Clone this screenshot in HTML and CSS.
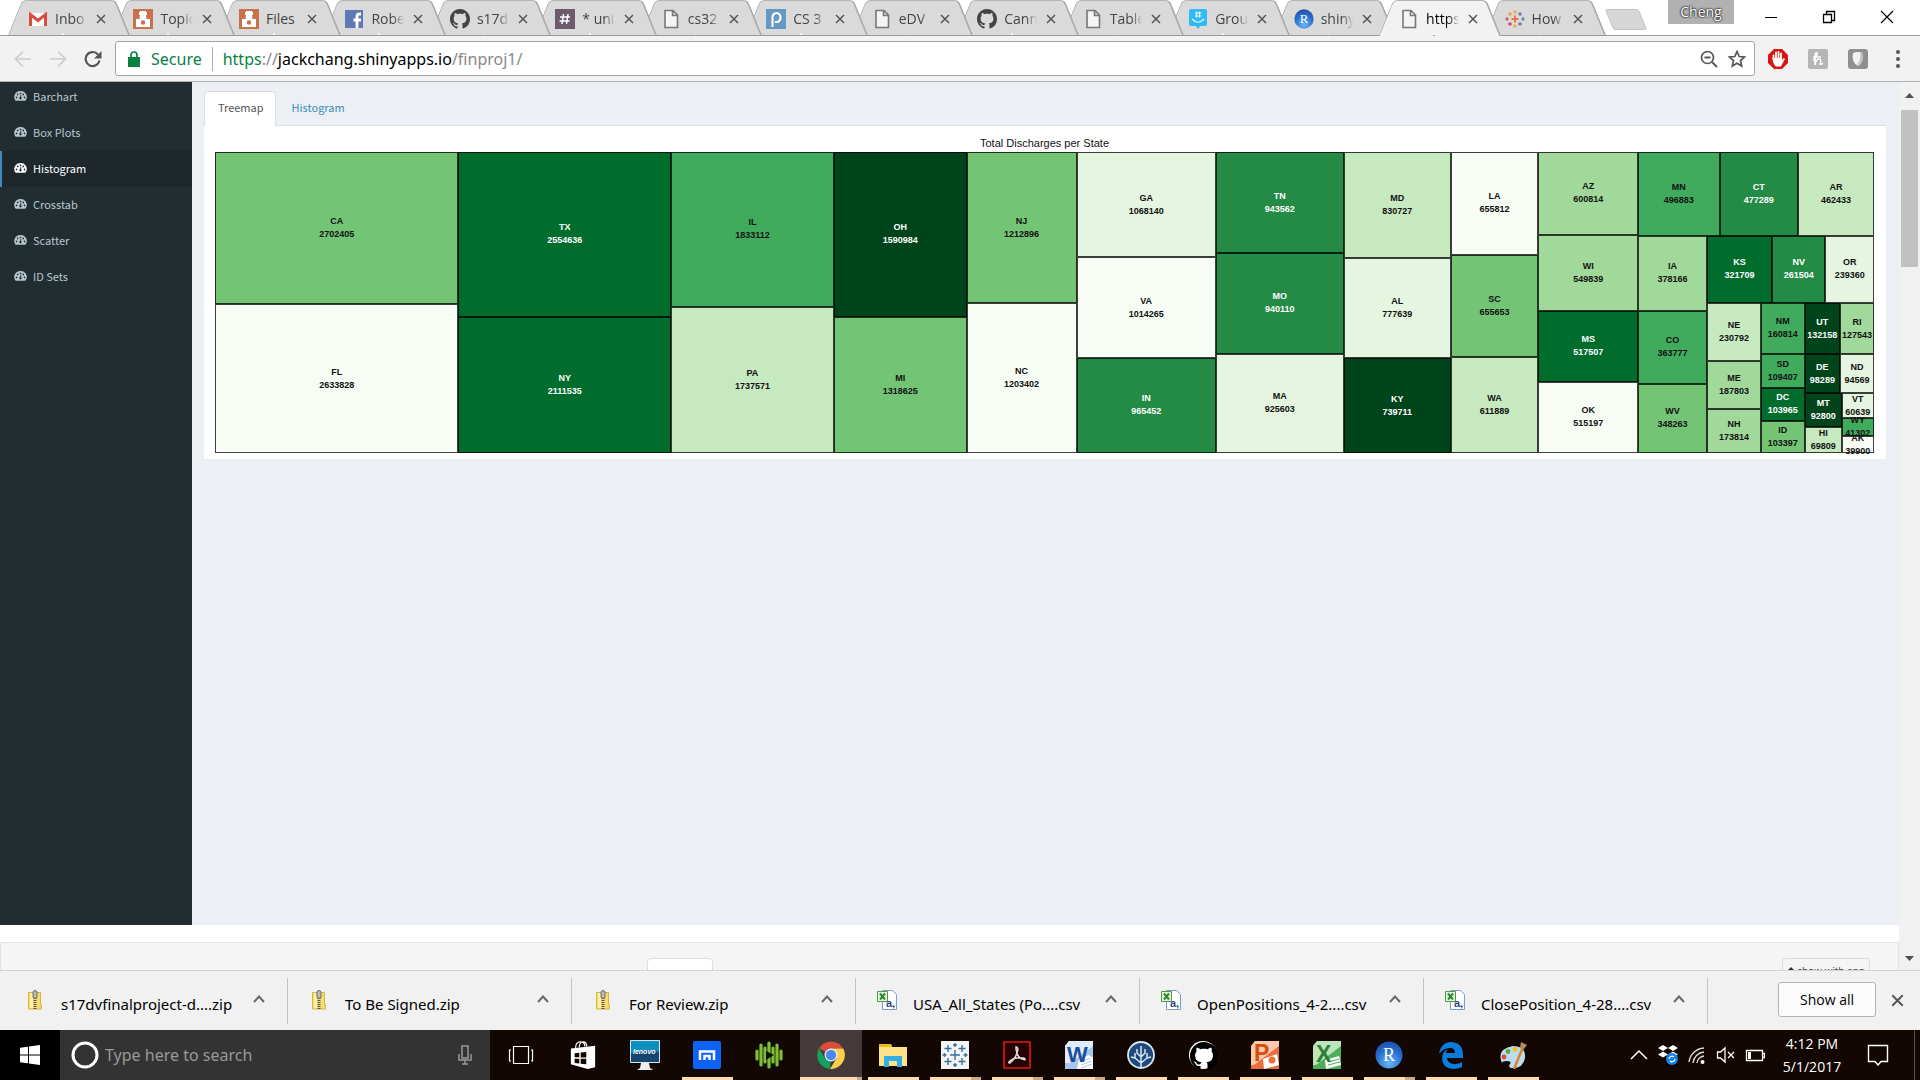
FILE: index.html
```html
<!DOCTYPE html>
<html lang="en">
<head>
<meta charset="utf-8">
<title>https://jackchang.shinyapps.io/finproj1/</title>
<link rel="stylesheet" href="styles.css">
</head>
<body>
<svg class="sprite" aria-hidden="true">
  <symbol id="x" viewBox="0 0 10 10"><path d="M1 1l8 8M9 1l-8 8" fill="none" stroke="currentColor" stroke-width="1.5"/></symbol>
  <symbol id="page" viewBox="0 0 20 20"><path d="M4 1.500h8l4.500 4.500v12.500H4zM11.500 1.500v5h5" fill="#f4f4f4" stroke="#777" stroke-width="1.600"/></symbol>
  <symbol id="github" viewBox="0 0 16 16"><path fill="currentColor" d="M8 0C3.580 0 0 3.580 0 8c0 3.540 2.290 6.530 5.470 7.590.4.070.55-.17.55-.38 0-.19-.010-.82-.010-1.490-2.010.37-2.530-.49-2.690-.94-.090-.23-.48-.94-.82-1.130-.28-.15-.68-.52-.010-.53.63-.010 1.080.58 1.230.82.72 1.210 1.870.87 2.330.66.070-.52.28-.87.51-1.070-1.780-.2-3.640-.89-3.640-3.950 0-.87.31-1.590.82-2.150-.080-.2-.36-1.020.080-2.120 0 0 .67-.21 2.200.82.64-.18 1.320-.27 2-.27.68 0 1.360.090 2 .27 1.530-1.040 2.200-.82 2.200-.82.44 1.100.16 1.920.080 2.120.51.56.82 1.270.82 2.150 0 3.070-1.870 3.750-3.650 3.950.29.25.54.73.54 1.480 0 1.070-.010 1.930-.010 2.200 0 .21.15.46.55.38A8.010 8.010 0 0 0 16 8c0-4.420-3.580-8-8-8z"/></symbol>
  <symbol id="canvas" viewBox="0 0 20 20"><path fill="#c8714b" d="M0 0h20v20H0z"/><path fill="#fff" d="M7 2h6v1h1v3H6V3h1zM7 6h6l.5 4H17v8H3v-8h3.500z"/><circle cx="10" cy="13.500" r="2.200" fill="#c8714b"/></symbol>
  <symbol id="dash" viewBox="0 0 14 12"><path fill="currentColor" d="M7 .5a6.500 6.500 0 0 0-5.700 10q.3.500.8.500h9.800q.5 0 .8-.5A6.500 6.500 0 0 0 7 .5z"/><g fill="#222d32"><circle cx="2.700" cy="7.500" r=".9"/><circle cx="4" cy="4.300" r=".9"/><circle cx="7" cy="3" r=".9"/><circle cx="10" cy="4.300" r=".9"/><circle cx="11.300" cy="7.500" r=".9"/><path d="M7.200 4.500l.8.200-.3 2.600a1.300 1.300 0 1 1-1.100-.2z"/></g></symbol>
  <symbol id="zip" viewBox="0 0 16 20"><path fill="#f8dc71" stroke="#d8b53c" d="M1.500 2.500h12V15h1v4h-13z"/><path d="M3 3h3v15H3z" fill="#fdf0a8"/><path d="M8 8v11" stroke="#555" stroke-width="3" stroke-dasharray="1 1"/><rect x="6" y=".5" width="4" height="8" rx="2" fill="#bbb" stroke="#666"/></symbol>
  <symbol id="csv" viewBox="0 0 20 20"><path fill="#fff" stroke="#7d9cc4" d="M5.500.5h10l4 4v15h-14z"/><path fill="#e4f1df" stroke="#4e9a47" d="M.5 1.500h10v10H.5z"/><path d="M3 3.500l5 6M8 3.500l-5 6" stroke="#2d8a2a" stroke-width="2"/><text x="9" y="16.500" font-size="11" font-weight="700" font-family="Liberation Sans, sans-serif" fill="#294a86">a,</text></symbol>
  <symbol id="up" viewBox="0 0 12 8"><path d="M1 7l5-5.500L11 7" fill="none" stroke="currentColor" stroke-width="2"/></symbol>
  <symbol id="rlogo" viewBox="0 0 28 28"><defs><radialGradient id="rg" cx=".5" cy=".8" r=".8"><stop offset="0" stop-color="#69b8f5"/><stop offset=".6" stop-color="#2a6fd0"/><stop offset="1" stop-color="#1d4fa8"/></radialGradient></defs><circle cx="14" cy="14" r="13.500" fill="url(#rg)"/><text x="14" y="20" text-anchor="middle" font-size="18" font-family="Liberation Serif, serif" fill="#fff">R</text></symbol>
</svg>

<header class="browser">
  <div class="tabstrip">
    <div class="tabs">
      <div class="tab" style="--z:15"><svg class="fav" viewBox="0 0 20 20"><path fill="#fff" d="M1 4h18v13H1z"/><path d="M2.500 17V5.500L10 11.500l7.500-6V17" fill="none" stroke="#dc4b3f" stroke-width="3"/></svg><span class="title">Inbo</span><button class="close" aria-label="Close"><svg><use href="#x"/></svg></button></div>
      <div class="tab" style="--z:14"><svg class="fav"><use href="#canvas"/></svg><span class="title">Topic</span><button class="close" aria-label="Close"><svg><use href="#x"/></svg></button></div>
      <div class="tab" style="--z:13"><svg class="fav"><use href="#canvas"/></svg><span class="title whole">Files</span><button class="close" aria-label="Close"><svg><use href="#x"/></svg></button></div>
      <div class="tab" style="--z:12"><svg class="fav" viewBox="0 0 20 20"><path fill="#6079b4" d="M1 1h18v18H1z"/><path d="M13 19v-8m-3.500 0H17m0-6h-1.500q-2.500 0-2.500 2.500V12" fill="none" stroke="#fff" stroke-width="2.800"/></svg><span class="title">Robe</span><button class="close" aria-label="Close"><svg><use href="#x"/></svg></button></div>
      <div class="tab" style="--z:11"><svg class="fav dark"><use href="#github"/></svg><span class="title">s17d</span><button class="close" aria-label="Close"><svg><use href="#x"/></svg></button></div>
      <div class="tab" style="--z:10"><svg class="fav" viewBox="0 0 20 20"><path fill="#6d5a6c" d="M0 0h20v20H0z"/><path d="M8.500 5l-1.500 10M13 5l-1.500 10M5 8h10M4.500 12h10" stroke="#fff" stroke-width="1.500"/></svg><span class="title">* uni</span><button class="close" aria-label="Close"><svg><use href="#x"/></svg></button></div>
      <div class="tab" style="--z:9"><svg class="fav"><use href="#page"/></svg><span class="title">cs32</span><button class="close" aria-label="Close"><svg><use href="#x"/></svg></button></div>
      <div class="tab" style="--z:8"><svg class="fav" viewBox="0 0 20 20"><path fill="#6599c3" d="M0 0h20v20H0z"/><path d="M6.500 18V8.500a4 4.500 0 1 1 4 4.500H9" fill="none" stroke="#fff" stroke-width="2.200"/></svg><span class="title">CS 3</span><button class="close" aria-label="Close"><svg><use href="#x"/></svg></button></div>
      <div class="tab" style="--z:7"><svg class="fav"><use href="#page"/></svg><span class="title">eDV</span><button class="close" aria-label="Close"><svg><use href="#x"/></svg></button></div>
      <div class="tab" style="--z:6"><svg class="fav dark"><use href="#github"/></svg><span class="title">Cann</span><button class="close" aria-label="Close"><svg><use href="#x"/></svg></button></div>
      <div class="tab" style="--z:5"><svg class="fav"><use href="#page"/></svg><span class="title">Table</span><button class="close" aria-label="Close"><svg><use href="#x"/></svg></button></div>
      <div class="tab" style="--z:4"><svg class="fav" viewBox="0 0 20 20"><path fill="#2fb9f5" d="M3 0h14q2 0 2 2v13q0 2-2 2h-5l-2 3-2-3H3q-2 0-2-2V2q0-2 2-2z"/><path d="M8.500 2.500v6M11.500 2.500v6M7 4h6.500M7 7h6.500M4 10q6 6.500 12 0" fill="none" stroke="#e8f6fd" stroke-width="1.200"/></svg><span class="title">Grou</span><button class="close" aria-label="Close"><svg><use href="#x"/></svg></button></div>
      <div class="tab" style="--z:3"><svg class="fav"><use href="#rlogo"/></svg><span class="title">shiny</span><button class="close" aria-label="Close"><svg><use href="#x"/></svg></button></div>
      <div class="tab active" style="--z:20"><svg class="fav"><use href="#page"/></svg><span class="title">https</span><button class="close" aria-label="Close"><svg><use href="#x"/></svg></button></div>
      <div class="tab" style="--z:2"><svg class="fav" viewBox="0 0 20 20"><path d="M10 6.500v7M6.500 10h7" stroke="#ee7440" stroke-width="2"/><path d="M10 1v4M8 3h4M10 15v4M8 17h4" stroke="#f0a95c" stroke-width="1.300"/><path d="M15 3v4M13 5h4M18 8v4M16.500 10h3M15 13v4M13 15h4" stroke="#6b7fae" stroke-width="1.300"/><path d="M5 3v4M3 5h4" stroke="#eaa04e" stroke-width="1.300"/><path d="M2 8v4M.5 10h3M5 13v4M3 15h4" stroke="#c9556d" stroke-width="1.300"/></svg><span class="title">How</span><button class="close" aria-label="Close"><svg><use href="#x"/></svg></button></div>
    </div>
    <div class="window-controls">
      <button class="newtab" aria-label="New tab"></button>
      <button class="user">Cheng</button>
      <button class="winbtn" aria-label="Minimize"><svg viewBox="0 0 14 14"><path d="M1 7.500h12" stroke="#000"/></svg></button>
      <button class="winbtn" aria-label="Restore"><svg viewBox="0 0 14 14"><path d="M1.500 4.500h8v8h-8zM4.500 4.500v-3h8v9h-3" fill="none" stroke="#000" stroke-width="1.300"/></svg></button>
      <button class="winbtn" aria-label="Close window"><svg viewBox="0 0 14 14"><path d="M1 1l12 12M13 1L1 13" stroke="#000" stroke-width="1.200"/></svg></button>
    </div>
  </div>

  <div class="toolbar">
    <button class="nav off" aria-label="Back"><svg viewBox="0 0 18 18"><path d="M17 9H2M9 1.500L1.500 9 9 16.500" fill="none" stroke="currentColor" stroke-width="1.700"/></svg></button>
    <button class="nav off" aria-label="Forward"><svg viewBox="0 0 18 18"><path d="M1 9h15M9 1.500L16.500 9 9 16.500" fill="none" stroke="currentColor" stroke-width="1.700"/></svg></button>
    <button class="nav" aria-label="Reload"><svg viewBox="0 0 18 18"><path d="M15.500 10.500A7 7 0 1 1 14 4.500" fill="none" stroke="currentColor" stroke-width="2.200"/><path d="M17.500 1v7.500H10z" fill="currentColor"/></svg></button>
    <div class="omnibox">
      <svg class="lock" viewBox="0 0 12 16"><path d="M0 6h12v10H0z" fill="#0b8043"/><path d="M3 7V4a3 3 0 0 1 6 0v3" fill="none" stroke="#0b8043" stroke-width="1.700"/></svg>
      <span class="secure">Secure</span>
      <span class="url"><span class="scheme">https</span>://<span class="host">jackchang.shinyapps.io</span>/finproj1/</span>
      <button class="omni" aria-label="Zoom"><svg viewBox="0 0 18 18"><circle cx="7.500" cy="7.500" r="6" fill="none" stroke="#555" stroke-width="1.700"/><path d="M4.500 7.500h6M12 12l5 5" stroke="#555" stroke-width="1.800"/></svg></button>
      <button class="omni" aria-label="Bookmark"><svg viewBox="0 0 18 18"><path d="M9 1.500l2.200 5 5.300.5-4 3.600 1.200 5.400L9 13.200 4.300 16l1.200-5.400-4-3.600 5.300-.5z" fill="none" stroke="#555" stroke-width="1.700"/></svg></button>
    </div>
    <button class="ext" aria-label="Ad blocker"><svg viewBox="0 0 20 20"><path d="M6 0h8l6 6v8l-6 6H6l-6-6V6z" fill="#d9150e"/><path d="M5.500 10V6.500M8 10V3.500M10.500 10V2.800M13 10V4.500" stroke="#fff" stroke-width="1.800" stroke-linecap="round"/><path d="M4.600 9h9.300v2l2-2 1 1-4 7.500H8q-3.400-2.500-3.400-8.500z" fill="#fff"/></svg></button>
    <button class="ext" aria-label="Honey"><svg viewBox="0 0 20 20"><rect width="20" height="20" rx="2" fill="#b5b5b5"/><path d="M5 11q5-3 4-7-2-1-2 5v7q1-6 4-6t1 5q1 1 3-1M5 8h8" fill="none" stroke="#fff" stroke-width="1.500"/></svg></button>
    <button class="ext" aria-label="Extension"><svg viewBox="0 0 20 20"><rect width="20" height="20" rx="3" fill="#8f8f8f"/><path d="M5 4q5-2 10 0 1 9-5 13-7-4-5-13z" fill="#f2f2f2"/><path d="M12 4q2 6-3 12h1q6-4 5-12z" fill="#bbb"/></svg></button>
    <button class="ext menu" aria-label="Menu"><svg viewBox="0 0 20 20"><g fill="#555"><circle cx="10" cy="3" r="2"/><circle cx="10" cy="10" r="2"/><circle cx="10" cy="17" r="2"/></g></svg></button>
  </div>
</header>

<div class="viewport">
  <div class="document">
    <div class="app">
      <nav class="sidebar">
        <a href="#barchart"><svg><use href="#dash"/></svg>Barchart</a>
        <a href="#box"><svg><use href="#dash"/></svg>Box Plots</a>
        <a href="#histogram" class="current"><svg><use href="#dash"/></svg>Histogram</a>
        <a href="#crosstab"><svg><use href="#dash"/></svg>Crosstab</a>
        <a href="#scatter"><svg><use href="#dash"/></svg>Scatter</a>
        <a href="#sets"><svg><use href="#dash"/></svg>ID Sets</a>
      </nav>
      <main class="content">
        <div class="pills"><a href="#treemap" class="current">Treemap</a><a href="#hist">Histogram</a></div>
        <section class="box">
          <h1>Total Discharges per State</h1>
          <div class="treemap">
            <div class="col" style="flex-grow:5336233"><div class="cell g4" style="flex-grow:2702405"><p>CA<br>2702405</p></div><div class="cell g0" style="flex-grow:2633828"><p>FL<br>2633828</p></div></div>
            <div class="col" style="flex-grow:4666171"><div class="cell g7" style="flex-grow:2554636"><p>TX<br>2554636</p></div><div class="cell g7" style="flex-grow:2111535"><p>NY<br>2111535</p></div></div>
            <div class="col" style="flex-grow:3570683"><div class="cell g5" style="flex-grow:1833112"><p>IL<br>1833112</p></div><div class="cell g2" style="flex-grow:1737571"><p>PA<br>1737571</p></div></div>
            <div class="col" style="flex-grow:2909609"><div class="cell g8" style="flex-grow:1590984"><p>OH<br>1590984</p></div><div class="cell g4" style="flex-grow:1318625"><p>MI<br>1318625</p></div></div>
            <div class="col" style="flex-grow:2416298"><div class="cell g4" style="flex-grow:1212896"><p>NJ<br>1212896</p></div><div class="cell g0" style="flex-grow:1203402"><p>NC<br>1203402</p></div></div>
            <div class="col" style="flex-grow:3047857"><div class="cell g1" style="flex-grow:1068140"><p>GA<br>1068140</p></div><div class="cell g0" style="flex-grow:1014265"><p>VA<br>1014265</p></div><div class="cell g6" style="flex-grow:965452"><p>IN<br>965452</p></div></div>
            <div class="col" style="flex-grow:2809275"><div class="cell g6" style="flex-grow:943562"><p>TN<br>943562</p></div><div class="cell g6" style="flex-grow:940110"><p>MO<br>940110</p></div><div class="cell g1" style="flex-grow:925603"><p>MA<br>925603</p></div></div>
            <div class="col" style="flex-grow:2348077"><div class="cell g2" style="flex-grow:830727"><p>MD<br>830727</p></div><div class="cell g1" style="flex-grow:777639"><p>AL<br>777639</p></div><div class="cell g8" style="flex-grow:739711"><p>KY<br>739711</p></div></div>
            <div class="col" style="flex-grow:1923354"><div class="cell g0" style="flex-grow:655812"><p>LA<br>655812</p></div><div class="cell g4" style="flex-grow:655653"><p>SC<br>655653</p></div><div class="cell g2" style="flex-grow:611889"><p>WA<br>611889</p></div></div>
            <div class="col" style="flex-grow:2183357"><div class="cell g3" style="flex-grow:600814"><p>AZ<br>600814</p></div><div class="cell g3" style="flex-grow:549839"><p>WI<br>549839</p></div><div class="cell g7" style="flex-grow:517507"><p>MS<br>517507</p></div><div class="cell g0" style="flex-grow:515197"><p>OK<br>515197</p></div></div>
            <div class="col" style="flex-grow:5176385">
              <div class="row" style="flex-grow:1436605"><div class="cell g5" style="flex-grow:496883"><p>MN<br>496883</p></div><div class="cell g6" style="flex-grow:477289"><p>CT<br>477289</p></div><div class="cell g2" style="flex-grow:462433"><p>AR<br>462433</p></div></div>
              <div class="row" style="flex-grow:3739780">
                <div class="col" style="flex-grow:1090206"><div class="cell g3" style="flex-grow:378166"><p>IA<br>378166</p></div><div class="cell g5" style="flex-grow:363777"><p>CO<br>363777</p></div><div class="cell g4" style="flex-grow:348263"><p>WV<br>348263</p></div></div>
                <div class="col" style="flex-grow:2649574">
                  <div class="row" style="flex-grow:822573"><div class="cell g7" style="flex-grow:321709"><p>KS<br>321709</p></div><div class="cell g6" style="flex-grow:261504"><p>NV<br>261504</p></div><div class="cell g1" style="flex-grow:239360"><p>OR<br>239360</p></div></div>
                  <div class="row" style="flex-grow:1827001">
                    <div class="col" style="flex-grow:592409"><div class="cell g2" style="flex-grow:230792"><p>NE<br>230792</p></div><div class="cell g3" style="flex-grow:187803"><p>ME<br>187803</p></div><div class="cell g3" style="flex-grow:173814"><p>NH<br>173814</p></div></div>
                    <div class="col" style="flex-grow:477583"><div class="cell g5" style="flex-grow:160814"><p>NM<br>160814</p></div><div class="cell g5" style="flex-grow:109407"><p>SD<br>109407</p></div><div class="cell g7" style="flex-grow:103965"><p>DC<br>103965</p></div><div class="cell g4" style="flex-grow:103397"><p>ID<br>103397</p></div></div>
                    <div class="col" style="flex-grow:757009">
                      <div class="row" style="flex-grow:259701"><div class="cell g8" style="flex-grow:132158"><p>UT<br>132158</p></div><div class="cell g3" style="flex-grow:127543"><p>RI<br>127543</p></div></div>
                      <div class="row" style="flex-grow:192858"><div class="cell g8" style="flex-grow:98289"><p>DE<br>98289</p></div><div class="cell g1" style="flex-grow:94569"><p>ND<br>94569</p></div></div>
                      <div class="row" style="flex-grow:304450">
                        <div class="col" style="flex-grow:162609"><div class="cell g8" style="flex-grow:92800"><p>MT<br>92800</p></div><div class="cell g2" style="flex-grow:69809"><p>HI<br>69809</p></div></div>
                        <div class="col" style="flex-grow:141841"><div class="cell g1" style="flex-grow:60639"><p>VT<br>60639</p></div><div class="cell g5" style="flex-grow:41302"><p>WY<br>41302</p></div><div class="cell g0" style="flex-grow:39900"><p>AK<br>39900</p></div></div>
                      </div>
                    </div>
                  </div>
                </div>
              </div>
            </div>
          </div>
        </section>
      </main>
    </div>
    <div class="showcase">
      <span class="tabstub"></span>
      <button class="withapp"><svg viewBox="0 0 8 8"><path d="M4 0l4 4H5v4H3V4H0z" fill="#333"/></svg>show with app</button>
    </div>
  </div>
  <div class="scrollbar"><svg viewBox="0 0 9 5"><path d="M4.500 0L9 5H0z" fill="#505050"/></svg><div class="thumb"></div><svg viewBox="0 0 9 5"><path d="M4.500 5L9 0H0z" fill="#505050"/></svg></div>
</div>

<div class="downloads">
  <button class="file"><svg class="ficon"><use href="#zip"/></svg><span>s17dvfinalproject-d....zip</span><svg class="chev"><use href="#up"/></svg></button>
  <button class="file"><svg class="ficon"><use href="#zip"/></svg><span>To Be Signed.zip</span><svg class="chev"><use href="#up"/></svg></button>
  <button class="file"><svg class="ficon"><use href="#zip"/></svg><span>For Review.zip</span><svg class="chev"><use href="#up"/></svg></button>
  <button class="file"><svg class="ficon"><use href="#csv"/></svg><span>USA_All_States (Po....csv</span><svg class="chev"><use href="#up"/></svg></button>
  <button class="file"><svg class="ficon"><use href="#csv"/></svg><span>OpenPositions_4-2....csv</span><svg class="chev"><use href="#up"/></svg></button>
  <button class="file"><svg class="ficon"><use href="#csv"/></svg><span>ClosePosition_4-28....csv</span><svg class="chev"><use href="#up"/></svg></button>
  <button class="showall">Show all</button>
  <button class="dismiss" aria-label="Close downloads"><svg><use href="#x"/></svg></button>
</div>

<footer class="taskbar">
  <button class="start" aria-label="Start"><svg viewBox="0 0 20 20"><path fill="#fff" d="M0 2.800l8-1.100v7.800H0zM9 1.500L20 0v9.500H9zM0 10.500h8v7.800l-8-1.100zM9 10.500h11V20L9 18.500z"/></svg></button>
  <label class="search"><svg class="ring" viewBox="0 0 28 28"><circle cx="14" cy="14" r="12" fill="none" stroke="#fff" stroke-width="3"/></svg><input type="text" aria-label="Search" placeholder="Type here to search"><svg class="mic" viewBox="0 0 14 20"><rect x="4" y="1" width="6" height="12" fill="none" stroke="#999" stroke-width="1.500"/><path d="M1 9v6h12V9M7 15v4M4 19h6" fill="none" stroke="#999" stroke-width="1.500"/></svg></label>
  <div class="apps">
    <button aria-label="Task view"><svg viewBox="0 0 28 28"><path d="M6.500 5.500h15v17h-15zM4 9H2.500v11H4M24 9h1.500v11H24" fill="none" stroke="#fff" stroke-width="1.200"/></svg></button>
    <button aria-label="Store"><svg viewBox="0 0 28 30"><path d="M1 8l26-3v23l-8 2L1 25z" fill="#fff"/><path d="M6 8q0-7 5-7t5 5M10 7q0-6 4-6t4 5" fill="none" stroke="#fff" stroke-width="1.300"/><path d="M5 13l5-.5v5H5zM11.500 12.300l6-.6v6h-6zM5 19h5v5l-5-.5zM11.500 19h6v6l-6-.6z" fill="#120800"/></svg></button>
    <button aria-label="Lenovo"><svg class="wide" viewBox="0 0 30 30"><path d="M.5.5h29v22H.5z" fill="#0d8fc2" stroke="#d5e6ee"/><path d="M1 13q15-5 28-1v10H1z" fill="#16456f"/><path d="M11 23h8l1 5 3 2H7l3-2z" fill="#eee"/><text x="3" y="14" font-size="7" font-style="italic" font-weight="700" font-family="Liberation Sans, sans-serif" fill="#fff">lenovo</text></svg></button>
    <button class="open" aria-label="Maxthon"><svg viewBox="0 0 28 28"><rect width="28" height="28" rx="2" fill="#0c63f5"/><path d="M7 19v-8.500h14V19M11.500 19v-4h5v4" fill="none" stroke="#fff" stroke-width="2.500"/></svg></button>
    <button aria-label="Audio"><svg viewBox="0 0 28 28"><circle cx="14" cy="14" r="13.500" fill="#0b1206"/><path d="M2 10v8M6 4v20M10 7v14M14 2v24M18 7v14M22 4v20M26 10v8" stroke="#82bd37" stroke-width="3.200" stroke-linecap="round"/><path d="M11 10l8 4-8 5z" fill="#0b1206"/></svg></button>
    <button class="open front" aria-label="Chrome"><svg viewBox="0 0 28 28"><path d="M14 14L2 7.200A14 14 0 0 1 26.200 7.500H14z" fill="#d94b3b"/><path d="M14 14L8 17.300 1.900 7.200A14 14 0 0 0 13 28z" fill="#15a05b"/><path d="M14 14l5.500 3.300L13 28A14 14 0 0 0 26.200 7.500H14z" fill="#fccf4a"/><circle cx="14" cy="14" r="6.500" fill="#f0f0f0"/><circle cx="14" cy="14" r="5.200" fill="#4a87ee"/></svg></button>
    <button class="open" aria-label="File Explorer"><svg viewBox="0 0 28 28"><path d="M0 3h12l1 3h15v19H0z" fill="#fde28a"/><path d="M0 3h12l1 3H0z" fill="#f2b91b"/><path d="M5 26V15h18v11h-5v-6h-8v6z" fill="#33ade2"/></svg></button>
    <button class="open many" aria-label="Tableau"><svg viewBox="0 0 28 28"><path fill="#f4f4f4" d="M0 0h28v28H0z"/><path d="M14 9v10M9 14h10M7 4v7M3.500 7.500h7M21 4v7M17.500 7.500h7M7 17v7M3.500 20.500h7M21 17v7M17.500 20.500h7M14 2v4M12 4h4M14 22v4M12 24h4M3.500 12v4M1.500 14h4M24.500 12v4M22.500 14h4" stroke="#33719f" stroke-width="1.400"/></svg></button>
    <button class="open many" aria-label="Acrobat"><svg viewBox="0 0 28 28"><path fill="#250304" stroke="#e51a0b" stroke-width="1.600" d="M1 1h26v26H1z"/><path d="M13 6q3 0 1 6T7 22q-3 0 1-3t13-2q3 3-2 1T13 8z" fill="none" stroke="#ddd" stroke-width="1.500"/></svg></button>
    <button class="open many" aria-label="Word"><svg viewBox="0 0 28 28"><path d="M4 0h24v28H0V5z" fill="#a7c6ee"/><path d="M4 0h24v5L5 22H0V5z" fill="#e1ecfa"/><path d="M14 18l10-4 4 3v11H12z" fill="#fff"/><path d="M16 21l10-4M16 24l11-4M16 27l11-4" stroke="#b4c8e2"/><text x="2" y="21" font-size="22" font-weight="700" font-family="Liberation Sans, sans-serif" fill="#1c4c9c">W</text></svg></button>
    <button class="open" aria-label="SourceTree"><svg viewBox="0 0 28 28"><circle cx="14" cy="14" r="13" fill="#1f4a7d" stroke="#dbe6ee" stroke-width="1.800"/><path d="M14 26V5M14 22l-6-5v-5M14 22l6-5v-5M14 16l-4-4V8M14 16l4-4V8M8 17l-4-1M20 17l4-1" fill="none" stroke="#dbe6ee" stroke-width="1.500"/></svg></button>
    <button class="open" aria-label="GitHub"><svg viewBox="0 0 28 28"><circle cx="14" cy="14" r="14" fill="#fff"/><svg x="1" y="1" width="26" height="26" color="#000"><use href="#github"/></svg></svg></button>
    <button class="open" aria-label="PowerPoint"><svg viewBox="0 0 28 28"><path d="M4 0h24v28H0V5z" fill="#e8703a"/><path d="M4 0h24v5L3 24H0V5z" fill="#f9c9ab"/><path d="M12 18l14-5 2 11-15 4z" fill="#fff"/><circle cx="21" cy="19" r="3.500" fill="#e8703a"/><text x="3" y="20" font-size="23" font-weight="700" font-family="Liberation Sans, sans-serif" fill="#d4500f">P</text></svg></button>
    <button class="open" aria-label="Excel"><svg viewBox="0 0 28 28"><path d="M4 0h24v28H0V5z" fill="#4fae57"/><path d="M4 0h24v5L3 24H0V5z" fill="#bfe3bd"/><path d="M12 19l14-4 2 9-15 4z" fill="#fff"/><path d="M15 21l11-3M15 24l12-3" stroke="#4fae57"/><text x="3" y="21" font-size="23" font-weight="700" font-family="Liberation Sans, sans-serif" fill="#2c7f33">X</text></svg></button>
    <button class="open many" aria-label="R"><svg><use href="#rlogo"/></svg></button>
    <button class="open" aria-label="Edge"><svg viewBox="0 0 28 28"><path d="M2 13Q4 1 14.500 1 26 2 26 14v3H10q1 6 8 6 4 0 7-2v5q-4 2-9 2Q5 27 5 17q0-6 6-9-2 2-2 4h9q0-5-5-5Q6 7 2 13z" fill="#0c7cdc"/></svg></button>
    <button class="open" aria-label="Paint"><svg viewBox="0 0 28 28"><path d="M14 5q13 0 12 12-2 11-14 10-3-1-1-4t-3-3-5 2Q-3 8 14 5z" fill="#bcdcef"/><circle cx="5" cy="16" r="2.400" fill="#e04a3b"/><circle cx="9" cy="10.500" r="2.400" fill="#52b043"/><circle cx="16" cy="8.500" r="2.400" fill="#f4c02c"/><path d="M24 6l-9 22" stroke="#d9832b" stroke-width="2.500"/><path d="M22 1l6 3-4 5-3-2z" fill="#b98a5a"/></svg></button>
  </div>
  <div class="tray">
    <svg viewBox="0 0 20 20"><path d="M2 14l8-8 8 8" fill="none" stroke="#fff" stroke-width="1.500"/></svg>
    <svg viewBox="0 0 20 20"><path d="M5 0l5 3-5 3-5-3zM15 0l5 3-5 3-5-3zM5 6.500l5 3-5 3-5-3zM15 6.500l5 3-5 3-5-3z" fill="#fff"/><circle cx="14" cy="14" r="6" fill="#1283e6"/><path d="M11 14a3 3 0 0 1 5-2M17 14a3 3 0 0 1-5 2" fill="none" stroke="#fff" stroke-width="1.200"/></svg>
    <svg viewBox="0 0 20 20"><path d="M2 17A16 16 0 0 1 17 3M6 18A12 12 0 0 1 17 7M10 18a8 8 0 0 1 7-7" fill="none" stroke="#ddd" stroke-width="1.400"/><circle cx="15.500" cy="17" r="2" fill="#fff"/></svg>
    <svg viewBox="0 0 20 20"><path d="M1.500 7h3L9 3v14l-4.500-4h-3zM12 7l6 6M18 7l-6 6" fill="none" stroke="#fff" stroke-width="1.300"/></svg>
    <svg viewBox="0 0 20 20"><path d="M1.500 5.500h16v10h-16zM17.500 8.500h2v4h-2" fill="none" stroke="#fff" stroke-width="1.300"/><path d="M3 7h3v7H3z" fill="#fff"/></svg>
    <div class="clock">4:12 PM<br>5/1/2017</div>
    <svg class="note" viewBox="0 0 22 22"><path d="M1.500 1.500h19v16H14l-3 3.500-3-3.500H1.500z" fill="none" stroke="#fff" stroke-width="1.400"/></svg>
    <button class="peek" aria-label="Show desktop"></button>
  </div>
</footer>
</body>
</html>
```
FILE: styles.css
```css
* { box-sizing: border-box; }
body {
  margin: 0;
  height: 100vh;
  display: flex;
  flex-direction: column;
  overflow: hidden;
  font-family: "Open Sans", "Noto Sans", sans-serif;
  font-size: 14px;
  background: #fff;
}
button { padding: 0; border: 0; background: none; font: inherit; color: inherit; }
a { text-decoration: none; }
svg { flex: none; display: block; }
.sprite { width: 0; height: 0; position: absolute; }

/* tab strip */
.browser { flex: none; }
.tabstrip { display: flex; height: 36px; padding-left: 8px; border-bottom: 1px solid #999; }
.tabs { flex: 1; display: flex; min-width: 0; }
.tab {
  flex: 1 1 0;
  min-width: 0;
  position: relative;
  z-index: var(--z);
  height: 35px;
  display: flex;
  align-items: center;
  padding: 2px 23px 0 20px;
  color: #444;
}
.tab + .tab { margin-left: -16px; }
.tab::before, .tab::after {
  content: "";
  position: absolute;
  z-index: -1;
  top: 0;
  bottom: 0;
  background: #dadada;
  border-top: 1px solid #b4b4b4;
}
.tab::before { left: 7px; right: 50%; transform: skewX(-22deg); border-left: 1px solid #aaa; border-top-left-radius: 5px; }
.tab::after { left: 40%; right: 7px; transform: skewX(22deg); border-right: 2px solid #aaa; border-top-right-radius: 5px; }
.tab.active { color: #000; height: 36px; }
.tab.active::before, .tab.active::after { background: #f2f2f2; }
.fav { width: 20px; height: 20px; margin-right: 7px; }
.fav.dark { color: #444; }
.title {
  flex: 1;
  min-width: 0;
  white-space: nowrap;
  line-height: 20px;
  mask-image: linear-gradient(90deg, #000 65%, transparent 98%);
}
.title.whole { mask-image: none; }
.close { width: 10px; height: 10px; margin-left: 8px; color: #555; }
.close svg { width: 10px; height: 10px; }
.window-controls { display: flex; width: 314px; align-items: flex-start; }
.newtab { width: 34px; height: 21px; margin: 9px 25px 0 3px; background: #d6d6d6; border: 1px solid #c4c4c4; border-radius: 3px; transform: skewX(22deg); }
.user { width: 66px; height: 24px; background: #b1b1b1; color: #fff; font-size: 14px; line-height: 22px; text-shadow: 0 0 2px #000, 0 0 2px #000; margin-right: 8px; }
.winbtn { width: 58px; height: 34px; display: grid; place-items: center; }
.winbtn svg { width: 14px; height: 14px; }

/* toolbar */
.toolbar { display: flex; align-items: center; height: 46px; padding-left: 14px; background: #f2f2f2; border-bottom: 1px solid #b1b1b1; }
.nav { width: 18px; margin-right: 17px; color: #555; }
.nav svg, .omni svg { width: 18px; height: 18px; }
.nav.off { color: #ccc; }
.nav:nth-child(3) { margin-right: 13px; }
.omnibox { flex: 1; height: 35px; display: flex; align-items: center; padding: 0 8px 0 12px; background: #fff; border: 1px solid #a5a5a5; border-radius: 3px; font: 16px "Noto Sans", sans-serif; }
.lock { width: 12px; height: 16px; margin-right: 11px; }
.secure { color: #0b8043; padding-right: 10px; border-right: 1px solid #aaa; line-height: 24px; }
.url { flex: 1; padding-left: 10px; color: #888; }
.scheme { color: #0b8043; }
.host { color: #000; }
.omni { margin-left: 10px; }
.ext { width: 20px; height: 20px; margin-left: 20px; }
.ext svg { width: 20px; height: 20px; }
.omnibox + .ext { margin-left: 13px; }
.menu { margin-right: 12px; }

/* page viewport */
.viewport { flex: 1; min-height: 0; display: flex; overflow: hidden; }
.document { flex: 1; min-width: 0; display: flex; flex-direction: column; }
.app { flex: 1; min-height: 0; display: flex; background: #ecf0f5; font-family: "Noto Sans CJK SC", sans-serif; font-size: 11px; }
.sidebar { width: 192px; background: #222d32; display: flex; flex-direction: column; overflow: hidden; }
.sidebar a { flex: none; height: 36px; display: flex; align-items: center; gap: 6px; padding: 0 0 2px 12px; border-left: 2px solid transparent; color: #b8c7ce; }
.sidebar a:first-child { height: 33px; padding-bottom: 5px; }
.sidebar .current { background: #1e282c; border-left-color: #3c8dbc; color: #fff; }
.sidebar svg { width: 13px; height: 12px; }
.content { flex: 1; min-width: 0; padding: 9px 13px 0 12px; }
.pills { display: flex; height: 35px; border-bottom: 1px solid #ddd; }
.pills a { height: 35px; padding: 0 13px; line-height: 32px; color: #3c8dbc; }
.pills .current { background: #fff; border: 1px solid #ddd; border-bottom: 0; border-radius: 4px 4px 0 0; color: #555; padding: 0 11px 0 13px; margin-right: 3px; line-height: 31px; }
.box { background: #fff; padding: 7px 12px 6px 11px; }
.box h1 { margin: 0; height: 19px; font: 11px/20px "Liberation Sans", sans-serif; text-align: center; color: #111; }

/* treemap */
.treemap { display: flex; height: 301px; font: bold 9px/13px "Liberation Sans", sans-serif; color: #111; }
.col, .row, .cell { flex: 0 1 0; min-width: 0; min-height: 0; display: flex; }
.col { flex-direction: column; }
.cell { align-items: center; justify-content: center; box-shadow: inset 0 0 0 1px rgba(0, 0, 0, .75); }
.cell p { margin: 0; position: relative; z-index: 1; text-align: center; }
.g0 { background: #f7fcf5; }
.g1 { background: #e5f5e0; }
.g2 { background: #c7e9c0; }
.g3 { background: #a1d99b; }
.g4 { background: #74c476; }
.g5 { background: #41ab5d; }
.g6 { background: #238b45; color: #fff; }
.g7 { background: #006d2c; color: #fff; }
.g8 { background: #00441b; color: #fff; }

.showcase { flex: none; height: 28px; margin-top: 17px; padding: 15px 28px 0 646px; display: flex; justify-content: space-between; overflow: hidden; background: #f5f5f5; border: 1px solid #e3e3e3; border-bottom: 0; }
.tabstub { width: 66px; height: 20px; background: #fff; border: 1px solid #ddd; border-radius: 4px 4px 0 0; }
.withapp { width: 88px; height: 26px; display: flex; align-items: center; justify-content: center; gap: 2px; border: 1px solid #ddd; border-radius: 3px; font-size: 10px; color: #333; }
.withapp svg { width: 8px; height: 8px; }
.scrollbar { width: 21px; padding: 11px 2px 9px; background: #f1f1f1; display: flex; flex-direction: column; align-items: center; }
.scrollbar svg { width: 9px; height: 5px; }
.thumb { width: 100%; height: 157px; margin: 12px 0 auto; background: #c1c1c1; }

/* downloads shelf */
.downloads { flex: none; height: 60px; display: flex; align-items: center; padding-left: 4px; background: #f1f1f1; border-top: 1px solid #d2d2d2; }
.file { flex: 0 1 284px; min-width: 0; height: 46px; display: flex; align-items: center; padding: 0 22px 0 21px; border-right: 1px solid #c4c4c4; text-align: left; }
.file span { flex: 1; min-width: 0; white-space: nowrap; font: 15px/20px "Noto Sans", sans-serif; padding-top: 6px; }
.ficon { width: 20px; height: 20px; margin: 0 16px 2px 0; }
.chev { width: 12px; height: 8px; margin-bottom: 4px; color: #666; }
.showall { width: 98px; height: 35px; margin: 0 15px 2px auto; background: #fcfcfc; border: 1px solid #b2b2b2; border-radius: 3px; }
.dismiss { width: 13px; height: 13px; margin-right: 16px; color: #555; }
.dismiss svg { width: 13px; height: 13px; }

/* taskbar */
.taskbar { flex: none; height: 50px; display: flex; background: #120702; color: #fff; }
.start { width: 60px; background: #000; display: grid; place-items: center; }
.start svg { width: 20px; height: 20px; }
.search { width: 430px; background: #333; display: flex; align-items: center; padding: 0 18px 0 11px; }
.ring { width: 28px; height: 28px; }
.search input { flex: 1; min-width: 0; border: 0; padding: 0 6px; background: none; font: 16px "Noto Sans", sans-serif; color: #fff; }
.search input::placeholder { color: #999; opacity: 1; }
.mic { width: 14px; height: 20px; }
.apps { flex: 1; display: flex; min-width: 0; }
.apps button { flex: 0 1 62px; display: grid; place-items: center; position: relative; }
.apps svg { width: 28px; height: 28px; }
.apps button > .wide { width: 30px; height: 30px; }
.open::after { content: ""; position: absolute; left: 6px; right: 5px; bottom: 0; height: 3px; background: #ffdcb0; }
.many::after { background: linear-gradient(90deg, #ffdcb0 80%, #c9ab87 80%); }
.front { background: #433a39; }
.front::after { left: 0; right: 0; background: linear-gradient(90deg, #ffdcb0 92%, #c9ab87 92%); }
.tray { display: flex; align-items: center; padding-right: 5px; gap: 9px; }
.tray svg { width: 20px; height: 20px; }
.clock { width: 76px; text-align: center; line-height: 23px; }
.tray .note { width: 22px; height: 22px; margin-left: 8px; }
.peek { align-self: stretch; width: 1px; margin-left: 16px; background: #555; }
```
